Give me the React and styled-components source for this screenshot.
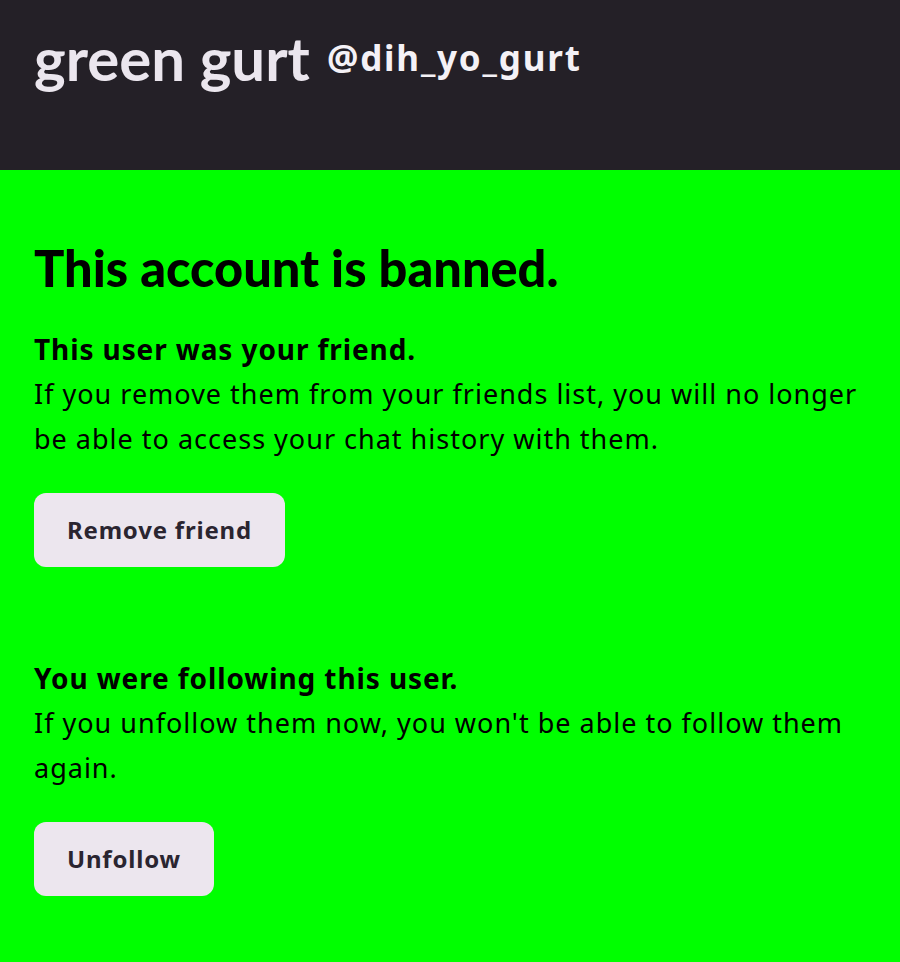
import React from "react";
import styled, { createGlobalStyle } from "styled-components";

const GlobalStyle = createGlobalStyle`
  html, body {
    margin: 0;
    padding: 0;
    background: #00ff00;
  }
  body {
    font-family: "Noto Sans", "Liberation Sans", sans-serif;
  }
`;

function App() {
  return (
    <>
      <GlobalStyle />
      <Page>
        <Header>
          <DisplayName>green gurt</DisplayName>
          <Handle>@dih_yo_gurt</Handle>
        </Header>
        <Main>
          <Title>This account is banned.</Title>
          <Section>
            <SubTitle>This user was your friend.</SubTitle>
            <Text>
              If you remove them from your friends list, you will no longer be
              able to access your chat history with them.
            </Text>
            <Button>Remove friend</Button>
          </Section>
          <Section>
            <SubTitle>You were following this user.</SubTitle>
            <Text>
              If you unfollow them now, you won't be able to follow them again.
            </Text>
            <Button>Unfollow</Button>
          </Section>
        </Main>
      </Page>
    </>
  );
}

const Page = styled.div`
  width: 900px;
  min-height: 962px;
  background: #00ff00;
`;

const Header = styled.header`
  height: 170px;
  box-sizing: border-box;
  background: #242027;
  padding: 28px 34px 0;
  display: flex;
  align-items: baseline;
  gap: 17px;
`;

const DisplayName = styled.h1`
  margin: 0;
  font-family: Lato, sans-serif;
  font-weight: 700;
  font-size: 60px;
  line-height: 1;
  color: #ebe6ee;
`;

const Handle = styled.span`
  font-family: "Noto Sans", sans-serif;
  font-weight: 700;
  font-size: 35px;
  letter-spacing: 1.8px;
  color: #f4f1f6;
  position: relative;
  top: -10px;
`;

const Main = styled.main`
  padding: 68px 34px 40px;
  display: flex;
  flex-direction: column;
`;

const Title = styled.h2`
  margin: 0 0 28px;
  font-family: Lato, sans-serif;
  font-weight: 900;
  font-size: 50.5px;
  line-height: 1.2;
  color: #000;
`;

const Section = styled.section`
  display: flex;
  flex-direction: column;
  align-items: flex-start;
  & + & {
    margin-top: 89px;
  }
`;

const SubTitle = styled.h3`
  margin: 0;
  font-family: "Noto Sans", sans-serif;
  font-weight: 700;
  font-size: 28px;
  letter-spacing: 0.9px;
  line-height: 44px;
  color: #000;
`;

const Text = styled.p`
  margin: 0;
  font-size: 27px;
  letter-spacing: 1px;
  line-height: 45px;
  color: #000;
  font-weight: 400;
`;

const Button = styled.button`
  margin-top: 32px;
  height: 74px;
  padding: 0 33px;
  border: none;
  border-radius: 12px;
  background: #ece6ee;
  color: #2a2530;
  font-family: "Noto Sans", sans-serif;
  font-weight: 700;
  font-size: 24px;
  letter-spacing: 0.8px;
  cursor: pointer;
`;

export default App;
